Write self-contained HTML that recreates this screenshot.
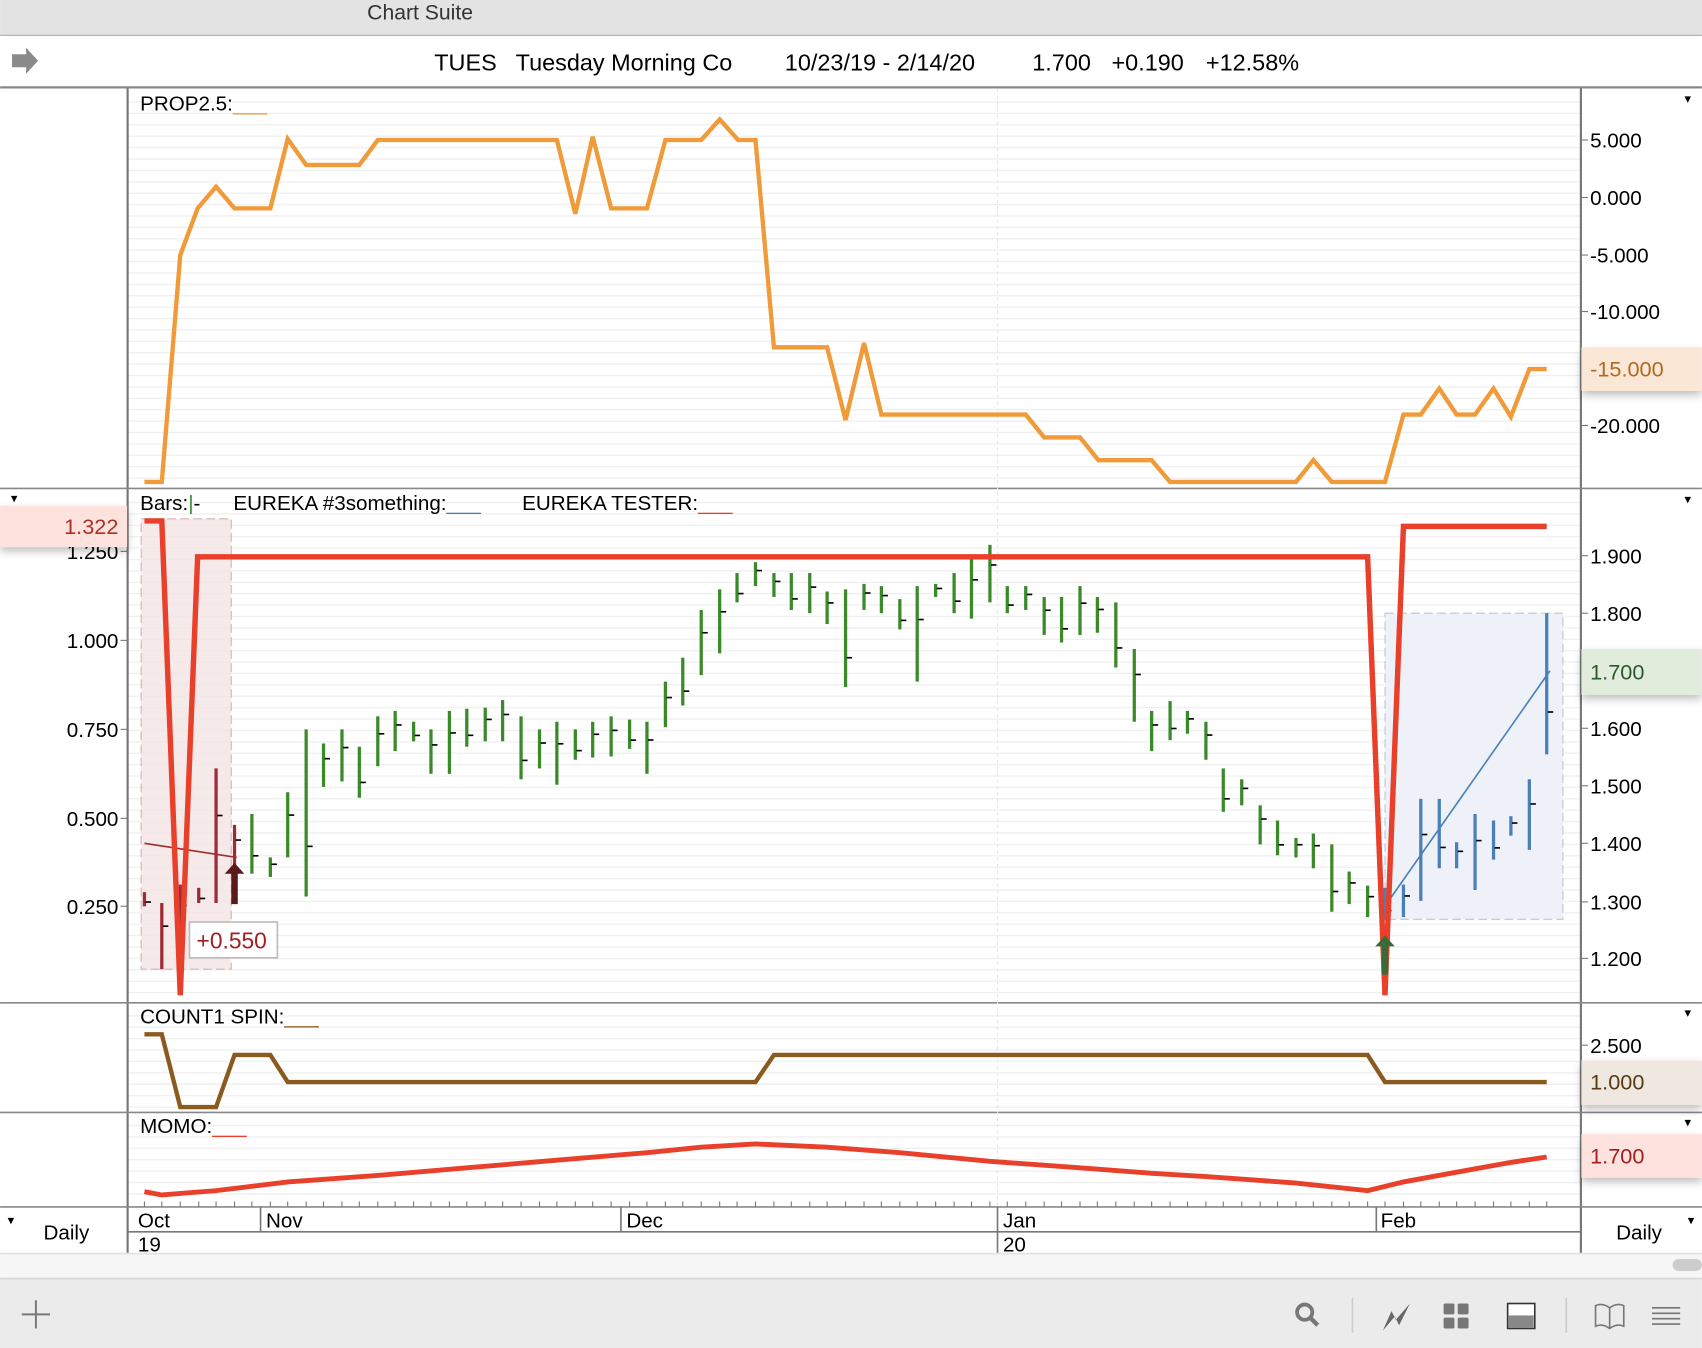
<!DOCTYPE html>
<html><head><meta charset="utf-8"><style>
html,body{margin:0;padding:0;background:#fff;overflow:hidden}
svg{display:block;font-family:"Liberation Sans",sans-serif}
</style></head><body>
<svg id="s" width="1702" height="1348" viewBox="0 0 1568 1242" xmlns="http://www.w3.org/2000/svg">
<defs><filter id="sh" x="-10%" y="-30%" width="120%" height="180%"><feDropShadow dx="0" dy="4" stdDeviation="4" flood-color="#000" flood-opacity=".25"/></filter></defs>
<rect x="0" y="0" width="1568" height="1242" fill="#fff"/>
<rect x="0" y="0" width="1568" height="32" fill="#e3e3e3"/>
<line x1="0" y1="32.5" x2="1568" y2="32.5" stroke="#a8a8a8"/>
<text x="387" y="18" font-size="19.5" fill="#333" text-anchor="middle">Chart Suite</text>
<path d="M11 50 h13 v-6 l11 12 l-11 12 v-6 h-13z" fill="#8a8a8a"/>
<text y="65" font-size="21.6" fill="#000"><tspan x="400">TUES</tspan><tspan x="475">Tuesday Morning Co</tspan><tspan x="723">10/23/19 - 2/14/20</tspan><tspan x="951">1.700</tspan><tspan x="1024">+0.190</tspan><tspan x="1111">+12.58%</tspan></text>
<line x1="0" y1="80.5" x2="1568" y2="80.5" stroke="#888" stroke-width="2"/>
<g id="grid"></g>
<line x1="117.5" y1="81" x2="117.5" y2="1155" stroke="#777" stroke-width="2"/>
<line x1="1456.5" y1="81" x2="1456.5" y2="1155" stroke="#777" stroke-width="2"/>
<line x1="0" y1="450" x2="1568" y2="450" stroke="#888" stroke-width="1.5"/>
<line x1="0" y1="924" x2="1568" y2="924" stroke="#888" stroke-width="1.5"/>
<line x1="0" y1="1025" x2="1568" y2="1025" stroke="#888" stroke-width="1.5"/>
<line x1="0" y1="1112" x2="1568" y2="1112" stroke="#888" stroke-width="1.5"/>
<line x1="919" y1="82" x2="919" y2="1112" stroke="#e6e6e6" stroke-dasharray="3,3"/>
<rect x="130" y="478" width="83" height="415" fill="#f3e4e4" fill-opacity=".8" stroke="#d8b0b0" stroke-dasharray="8,4"/>
<rect x="1276" y="565" width="164" height="282" fill="#eef1f8" stroke="#b8c6dc" stroke-dasharray="8,4"/>
<text x="129" y="102" font-size="19">PROP2.5:<tspan fill="#f09a3a">___</tspan></text>
<text x="129" y="470" font-size="19">Bars:<tspan fill="#3a8a3a">|</tspan>-   <tspan x="215">EUREKA #3something:</tspan><tspan fill="#4a80b8">___</tspan><tspan x="481">EUREKA TESTER:</tspan><tspan fill="#e8402a">___</tspan></text>
<text x="129" y="943" font-size="19">COUNT1 SPIN:<tspan fill="#8b5a1e">___</tspan></text>
<text x="129" y="1044" font-size="19">MOMO:<tspan fill="#e8402a">___</tspan></text>
<g id="bars"></g>
<line x1="133" y1="777" x2="218" y2="790" stroke="#a03030" stroke-width="1.5"/>
<line x1="1278" y1="832" x2="1428" y2="618" stroke="#4a80b8" stroke-width="1.5"/>
<path id="orange" fill="none" stroke="#f09a3a" stroke-width="4"/>
<path id="red" fill="none" stroke="#e8402a" stroke-width="5"/>
<path id="brown" fill="none" stroke="#8b5a1e" stroke-width="4"/>
<path id="momo" fill="none" stroke="#e8402a" stroke-width="4.5"/>
<path d="M216 795 l-9 10 h6 v28 h6 v-28 h6z" fill="#5a1a1a"/>
<path d="M1276 862 l-9 10 h6 v26 h6 v-26 h6z" fill="#3a6a3a"/>
<rect x="174.5" y="849.5" width="81" height="33" fill="#fff" stroke="#bbb" stroke-width="1.5"/>
<text x="181" y="874" font-size="21" fill="#a02020">+0.550</text>
<g font-size="19" fill="#000" id="raxis"></g>
<rect x="1457" y="320" width="111" height="40" fill="#fbe7d6" filter="url(#sh)"/>
<text x="1465" y="347" font-size="20" fill="#b06a20">-15.000</text>
<rect x="1457" y="598" width="111" height="42" fill="#e2ecdd" filter="url(#sh)"/>
<text x="1465" y="626" font-size="20" fill="#2a5a2a">1.700</text>
<rect x="1457" y="977" width="111" height="41" fill="#efe8e0" filter="url(#sh)"/>
<text x="1465" y="1004" font-size="20" fill="#5a3a10">1.000</text>
<rect x="1457" y="1045" width="111" height="40" fill="#fde2de" filter="url(#sh)"/>
<text x="1465" y="1072" font-size="20" fill="#a02020">1.700</text>
<rect x="0" y="466" width="117" height="38" fill="#fde2de" filter="url(#sh)"/>
<text x="109" y="492" font-size="20" fill="#b03020" text-anchor="end">1.322</text>
<g font-size="12" fill="#000"><text x="1552" y="95">▾</text><text x="1552" y="464">▾</text><text x="1552" y="937">▾</text><text x="1552" y="1038">▾</text><text x="10" y="463">▾</text><text x="7" y="1128">▾</text><text x="1555" y="1128">▾</text></g>
<line x1="118" y1="1135" x2="1456" y2="1135" stroke="#777" stroke-width="1.5"/>
<g stroke="#777" stroke-width="1.5"><line x1="240" y1="1112" x2="240" y2="1135"/><line x1="572" y1="1112" x2="572" y2="1135"/><line x1="919" y1="1112" x2="919" y2="1155"/><line x1="1268" y1="1112" x2="1268" y2="1135"/></g>
<g id="ticks" stroke="#777"></g>
<g font-size="19"><text x="127" y="1131">Oct</text><text x="127" y="1153">19</text><text x="245" y="1131">Nov</text><text x="577" y="1131">Dec</text><text x="924" y="1131">Jan</text><text x="924" y="1153">20</text><text x="1272" y="1131">Feb</text>
<text x="40" y="1142">Daily</text><text x="1489" y="1142">Daily</text></g>
<rect x="0" y="1155" width="1568" height="23" fill="#f6f6f6"/>
<line x1="0" y1="1155" x2="1568" y2="1155" stroke="#e2e2e2" stroke-width="1.5"/>
<rect x="1541" y="1160" width="27" height="11" rx="5.5" fill="#ccc"/>
<rect x="0" y="1178" width="1568" height="64" fill="#ebebeb"/>
<line x1="0" y1="1178" x2="1568" y2="1178" stroke="#d6d6d6" stroke-width="1.5"/>
<g stroke="#777" stroke-width="1.8" fill="none"><line x1="33" y1="1198" x2="33" y2="1224"/><line x1="20" y1="1211" x2="46" y2="1211"/></g>
<g fill="none" stroke="#777" stroke-width="3.5"><circle cx="1202" cy="1209" r="7"/><line x1="1207" y1="1214" x2="1214" y2="1221" stroke-width="4"/></g>
<line x1="1246" y1="1196" x2="1246" y2="1228" stroke="#ccc" stroke-width="1.5"/>
<path d="M1274 1226 l8 -18 l4 8 l13 -15 l-10 20 l-4 -8z" fill="#666"/>
<g fill="#777"><rect x="1330" y="1201" width="10" height="10" rx="1.5"/><rect x="1343" y="1201" width="10" height="10" rx="1.5"/><rect x="1330" y="1214" width="10" height="10" rx="1.5"/><rect x="1343" y="1214" width="10" height="10" rx="1.5"/></g>
<rect x="1389" y="1201" width="25" height="23" fill="#fff" stroke="#333" stroke-width="1.5"/><rect x="1390" y="1212" width="23" height="11" fill="#888"/>
<line x1="1443" y1="1196" x2="1443" y2="1228" stroke="#ccc" stroke-width="1.5"/>
<path d="M1470 1222 v-19 q6 -3 13 2 q7 -5 13 -2 v19 q-6 -3 -13 2 q-7 -5 -13 -2z M1483 1205 v19" fill="none" stroke="#777" stroke-width="1.5"/>
<g stroke="#777" stroke-width="1.5"><line x1="1522" y1="1205" x2="1548" y2="1205"/><line x1="1522" y1="1210" x2="1548" y2="1210"/><line x1="1522" y1="1215" x2="1548" y2="1215"/><line x1="1522" y1="1220" x2="1548" y2="1220"/></g>
</svg>
<script>
var NS="http://www.w3.org/2000/svg";
function el(p,t,a){var e=document.createElementNS(NS,t);for(var k in a)e.setAttribute(k,a[k]);document.getElementById(p).appendChild(e);return e;}
[[86,448],[455,922],[928,1023],[1029,1110]].forEach(function(r){for(var y=r[0]+8;y<r[1];y+=10.5)el('grid','line',{x1:118,x2:1456,y1:y,y2:y,stroke:'#f0f0f0','stroke-width':1.3});});
function pts(id,a){var d='';for(var i=0;i<a.length;i++)d+=(i?'L':'M')+a[i][0]+' '+a[i][1];document.getElementById(id).setAttribute('d',d);}
pts('orange',[[133,444],[149,444],[166,235],[182,192],[199,172],[216,192],[249,192],[265,128],[282,152],[331,152],[348,129],[513,129],[530,197],[546,126],[563,192],[596,192],[613,129],[646,129],[663,110],[680,129],[696,129],[713,320],[762,320],[779,387],[796,316],[812,382],[945,382],[962,403],[995,403],[1012,424],[1061,424],[1078,444],[1194,444],[1210,424],[1227,444],[1276,444],[1293,382],[1309,382],[1326,358],[1342,382],[1359,382],[1376,358],[1392,384],[1409,340],[1425,340]]);
pts('red',[[133,480],[149,480],[166,917],[182,513],[1260,513],[1276,917],[1293,485],[1425,485]]);
pts('brown',[[133,953],[149,953],[166,1020],[199,1020],[216,972],[249,972],[265,997],[696,997],[713,972],[1260,972],[1276,997],[1425,997]]);
pts('momo',[[133,1098],[149,1101],[199,1097],[265,1089],[348,1083],[430,1076],[513,1069],[596,1062],[646,1057],[696,1054],[762,1057],[829,1062],[912,1070],[995,1076],[1061,1081],[1111,1084],[1194,1090],[1260,1097],[1293,1089],[1342,1080],[1392,1071],[1425,1066]]);
var B=[[133,822,835],[149,832,893],[166,815,870],[183,818,832],[199,708,832],[216,760,800],[232,750,805],[249,790,808],[265,730,790],[282,672,826],[298,685,725],[315,672,720],[331,688,735],[348,660,706],[364,655,692],[381,665,683],[397,672,713],[414,655,713],[430,653,688],[447,652,683],[463,645,683],[480,660,718],[497,672,708],[513,665,723],[530,672,700],[546,665,698],[563,660,697],[580,663,690],[596,665,713],[613,628,670],[629,606,650],[646,562,622],[663,543,602],[679,528,555],[696,518,540],[713,528,550],[729,528,562],[746,528,565],[762,545,575],[779,543,633],[796,538,562],[812,540,565],[829,552,580],[845,540,628],[862,538,550],[879,528,565],[895,515,570],[912,502,555],[928,540,565],[945,540,562],[962,550,585],[978,550,592],[995,540,585],[1011,550,583],[1028,555,615],[1045,598,665],[1061,655,692],[1078,646,682],[1094,655,676],[1111,665,700],[1127,708,748],[1144,718,742],[1161,742,778],[1177,756,788],[1194,772,790],[1210,768,800],[1227,778,840],[1243,803,833],[1260,816,845],[1276,818,848],[1293,815,845],[1309,736,830],[1326,736,800],[1342,776,800],[1359,750,820],[1376,756,792],[1392,752,770],[1409,718,783],[1425,565,695]];
B.forEach(function(b,i){var c=i<6?'#a02a35':(i<69?'#3a8a2a':'#4a80b8');el('bars','line',{x1:b[0],x2:b[0],y1:b[1],y2:b[2],stroke:c,'stroke-width':3});var cy=(i%3==0)?b[1]+(b[2]-b[1])*0.7:b[1]+(b[2]-b[1])*0.35;el('bars','line',{x1:b[0]+1,x2:b[0]+6,y1:cy,y2:cy,stroke:'#000','stroke-width':1.5});
el('ticks','line',{x1:b[0],x2:b[0],y1:1107,y2:1112});});
[[129,'5.000'],[182,'0.000'],[235,'-5.000'],[287,'-10.000'],[392,'-20.000'],[512,'1.900'],[565,'1.800'],[671,'1.600'],[724,'1.500'],[777,'1.400'],[831,'1.300'],[883,'1.200'],[963,'2.500']].forEach(function(a){var t=el('raxis','text',{x:1465,y:a[0]+7});t.textContent=a[1];el('raxis','line',{x1:1457,x2:1463,y1:a[0],y2:a[0],stroke:'#777'});});
[[508,'1.250'],[590,'1.000'],[672,'0.750'],[754,'0.500'],[835,'0.250']].forEach(function(a){var t=el('raxis','text',{x:109,y:a[0]+7,'text-anchor':'end'});t.textContent=a[1];el('raxis','line',{x1:111,x2:117,y1:a[0],y2:a[0],stroke:'#777'});});
</script>
</body></html>
